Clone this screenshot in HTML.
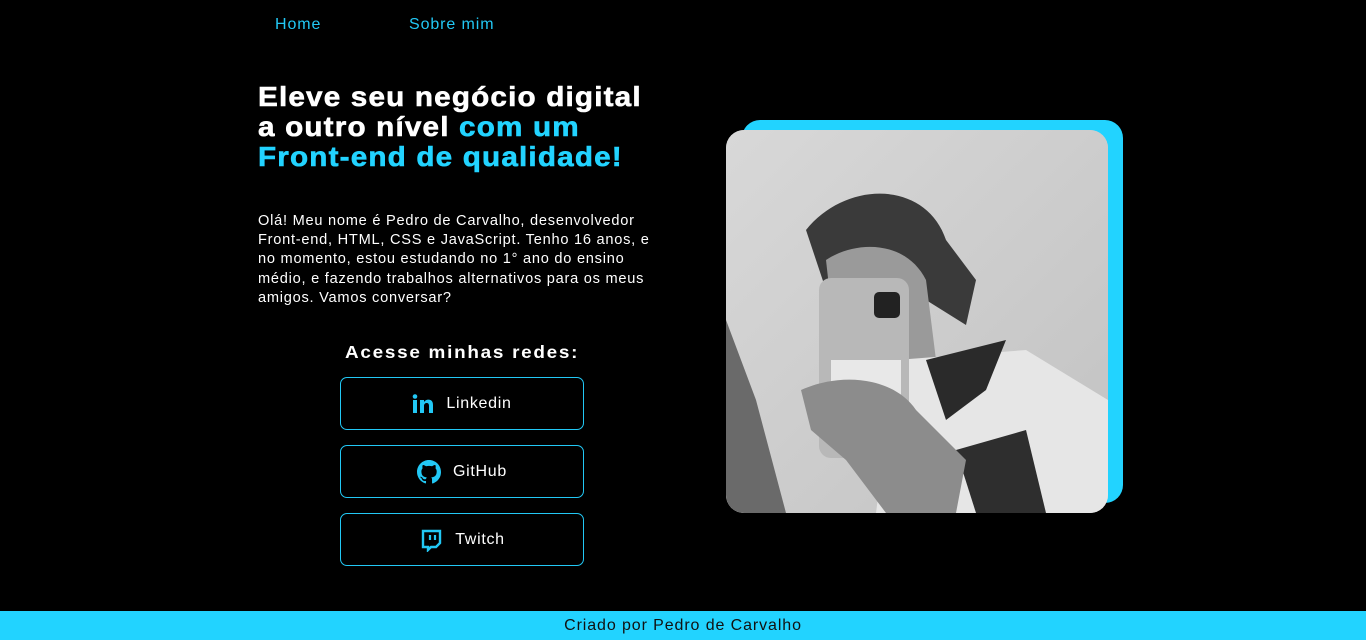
<!DOCTYPE html>
<html><head><meta charset="utf-8">
<style>
*{margin:0;padding:0;box-sizing:border-box}
html,body{width:1366px;height:640px;background:#000;overflow:hidden;font-family:"Liberation Sans",sans-serif;color:#fff;position:relative}
.nav a{position:absolute;top:16px;color:#22c8f5;font-size:16px;text-decoration:none;letter-spacing:0.9px}
h1{position:absolute;left:258px;top:82px;font-size:28px;line-height:30px;font-weight:bold;letter-spacing:1.1px;transform:scaleX(1.06);transform-origin:left top;white-space:nowrap;-webkit-text-stroke:0.6px currentColor}
h1 span{color:#22d3ff}
p.intro{position:absolute;left:258px;top:212px;font-size:14.6px;line-height:19.2px;letter-spacing:0.75px;white-space:nowrap}
h2{position:absolute;left:345px;top:342px;font-size:17.5px;font-weight:bold;letter-spacing:1.6px;white-space:nowrap;transform:scaleX(1.08);transform-origin:left top}
.btn{position:absolute;left:340px;width:244px;height:53px;border:1px solid #22c8f5;border-radius:7px;display:flex;align-items:center;justify-content:center;gap:12px;font-size:16px;letter-spacing:0.7px}
.back{position:absolute;left:742px;top:120px;width:381px;height:383px;background:#22d3ff;border-radius:18px}
.photo{position:absolute;left:726px;top:130px;width:382px;height:383px;border-radius:18px;overflow:hidden;background:#cfcfcf}
footer{position:absolute;left:0;top:611px;width:1366px;height:29px;background:#22d3ff;color:#111;text-align:center;font-size:16px;line-height:29px;letter-spacing:0.9px}
</style></head><body>
<div class="nav"><a style="left:275px">Home</a><a style="left:409px">Sobre mim</a></div>
<h1>Eleve seu negócio digital<br>a outro nível <span>com um<br>Front-end de qualidade!</span></h1>
<p class="intro">Olá! Meu nome é Pedro de Carvalho, desenvolvedor<br>Front-end, HTML, CSS e JavaScript. Tenho 16 anos, e<br>no momento, estou estudando no 1° ano do ensino<br>médio, e fazendo trabalhos alternativos para os meus<br>amigos. Vamos conversar?</p>
<h2>Acesse minhas redes:</h2>
<div class="btn" style="top:377px"><svg width="22" height="20" viewBox="0 0 22 20"><rect x="1" y="6" width="4" height="13" fill="#22c8f5"/><circle cx="3" cy="2.5" r="2.3" fill="#22c8f5"/><path d="M8 6h4v2c1-1.6 2.6-2.4 4.4-2.4 3 0 4.6 1.8 4.6 5.4V19h-4v-7.2c0-1.8-.7-2.8-2.2-2.8S12 10 12 11.8V19H8z" fill="#22c8f5"/></svg>Linkedin</div>
<div class="btn" style="top:445px"><svg width="24" height="24" viewBox="0 0 16 16"><path fill="#22c8f5" d="M8 0C3.58 0 0 3.58 0 8c0 3.54 2.290 6.53 5.47 7.59.4.07.55-.17.55-.38v-1.33c-2.23.48-2.7-1.07-2.7-1.07-.36-.92-.89-1.170-.89-1.17-.73-.5.06-.49.06-.49.8.06 1.23.83 1.23.83.72 1.23 1.88.87 2.34.67.07-.52.28-.87.51-1.07-1.78-.2-3.64-.89-3.64-3.95 0-.87.31-1.59.82-2.15-.08-.2-.36-1.02.08-2.12 0 0 .67-.21 2.2.82a7.6 7.6 0 014 0c1.53-1.04 2.2-.82 2.2-.82.44 1.1.16 1.92.08 2.12.51.56.82 1.27.82 2.15 0 3.07-1.87 3.75-3.65 3.95.29.25.54.73.54 1.48v2.2c0 .21.15.46.55.38A8 8 0 0016 8c0-4.42-3.58-8-8-8z"/></svg>GitHub</div>
<div class="btn" style="top:513px"><svg width="24" height="24" viewBox="0 0 24 24"><path fill="none" stroke="#22c8f5" stroke-width="2.4" d="M4 3h17v12l-4 4h-5l-3 3v-3H4z"/><path stroke="#22c8f5" stroke-width="2.2" d="M11 7v5M16 7v5"/></svg>Twitch</div>
<div class="back"></div>
<div class="photo"><svg width="382" height="383" viewBox="0 0 382 383">
<defs><linearGradient id="bg" x1="0" y1="0" x2="1" y2="1"><stop offset="0" stop-color="#d8d8d8"/><stop offset="1" stop-color="#c2c2c2"/></linearGradient></defs>
<rect width="382" height="383" fill="url(#bg)"/>
<path d="M0 190 L30 270 L60 383 L0 383z" fill="#6a6a6a"/>
<path d="M80 100 C120 50 200 50 220 110 L250 150 L240 195 L200 170 L180 230 L150 240 L110 190 Z" fill="#3a3a3a"/>
<path d="M100 130 C130 110 180 110 200 150 L210 230 L160 260 L110 220 Z" fill="#9a9a9a"/>
<path d="M170 230 L300 220 L382 270 L382 383 L150 383 Z" fill="#e6e6e6"/>
<path d="M200 230 L280 210 L260 260 L220 290 Z" fill="#2a2a2a"/>
<path d="M230 320 L300 300 L320 383 L250 383 Z" fill="#2e2e2e"/>
<rect x="93" y="148" width="90" height="180" rx="12" fill="#b8b8b8"/>
<rect x="148" y="162" width="26" height="26" rx="5" fill="#222"/>
<rect x="105" y="230" width="70" height="50" fill="#e8e8e8"/>
<path d="M75 260 C120 240 170 250 190 280 L240 330 L230 383 L160 383 L120 330 L85 300 Z" fill="#8c8c8c"/>
</svg></div>
<footer>Criado por Pedro de Carvalho</footer>
</body></html>
